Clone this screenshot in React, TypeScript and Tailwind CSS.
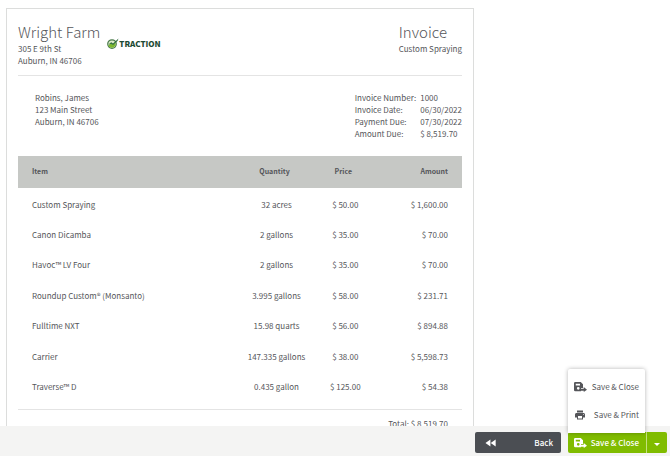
import { MdFastRewind, MdPrint } from "react-icons/md";

type Line = { item: string; quantity: string; price: string; amount: string };

const lines: Line[] = [
  { item: "Custom Spraying", quantity: "32 acres", price: "$ 50.00", amount: "$ 1,600.00" },
  { item: "Canon Dicamba", quantity: "2 gallons", price: "$ 35.00", amount: "$ 70.00" },
  { item: "Havoc™ LV Four", quantity: "2 gallons", price: "$ 35.00", amount: "$ 70.00" },
  { item: "Roundup Custom® (Monsanto)", quantity: "3.995 gallons", price: "$ 58.00", amount: "$ 231.71" },
  { item: "Fulltime NXT", quantity: "15.98 quarts", price: "$ 56.00", amount: "$ 894.88" },
  { item: "Carrier", quantity: "147.335 gallons", price: "$ 38.00", amount: "$ 5,598.73" },
  { item: "Traverse™ D", quantity: "0.435 gallon", price: "$ 125.00", amount: "$ 54.38" },
];

const details = [
  ["Invoice Number:", "1000"],
  ["Invoice Date:", "06/30/2022"],
  ["Payment Due:", "07/30/2022"],
  ["Amount Due:", "$ 8,519.70"],
];

function SaveExitIcon() {
  return (
    <svg viewBox="0 0 26 20" className="h-[10px] w-[13px] shrink-0" fill="currentColor" aria-hidden="true">
      <path
        fillRule="evenodd"
        d="M2.500 0H13.500L18 4.500V12H14V18.500H2.500A2.500 2.500 0 0 1 0 16V2.500A2.500 2.500 0 0 1 2.500 0ZM3.500 3.500V7H12V3.500ZM8.500 10A2.700 2.700 0 1 0 8.500 15.400A2.700 2.700 0 1 0 8.500 10Z"
      />
      <path d="M14 13.500H19.500V10L26 15.500L19.500 20V17.500H14Z" />
    </svg>
  );
}

function TractionLogo() {
  return (
    <div className="flex items-center text-[#1d4a33]">
      <svg viewBox="0 0 24 22" className="h-[11px] w-[12px] shrink-0" aria-hidden="true">
        <circle cx="10" cy="12" r="8.500" fill="#dfeccb" stroke="#4a7a4c" strokeWidth="2.500" />
        <path d="M3 15C6 10 9 11 11 13L17 9C18 15 15 19 10 19.500C6 19.500 3.500 17.500 3 15Z" fill="#7cb82f" />
        <path d="M5 11L8.500 8.500L12 11L23 1L21 6L12 14L8 11.500L4 13Z" fill="#2d6b3c" />
      </svg>
      <span className="text-[8px] leading-[11px] font-black">TRACTION</span>
    </div>
  );
}

export default function App() {
  return (
    <div className="flex h-screen flex-col bg-white font-['Noto_Sans_CJK_SC',sans-serif] text-[8px] leading-3 text-[#55565a]">
      <main className="min-h-0 flex-1 overflow-hidden pt-2 pr-[196px] pl-[6px]">
        <article className="border border-[#dcdddc] px-[11px] pt-3 pb-8">
          <header className="flex justify-between border-b border-[#e4e4e4] pb-2">
            <div className="flex gap-[7px]">
              <div>
                <h1 className="text-[15px] leading-[22px] font-light">Wright Farm</h1>
                <p>305 E 9th St</p>
                <p>Auburn, IN 46706</p>
              </div>
              <div className="pt-[17px]">
                <TractionLogo />
              </div>
            </div>
            <div>
              <h2 className="text-[15px] leading-[22px] font-light">Invoice</h2>
              <p>Custom Spraying</p>
            </div>
          </header>

          <section className="flex justify-between pt-4 pb-4 pl-[17px]">
            <address className="not-italic">
              Robins, James
              <br />
              123 Main Street
              <br />
              Auburn, IN 46706
            </address>
            <dl className="grid grid-cols-[auto_auto] gap-x-1">
              {details.map(([label, value]) => (
                <div key={label} className="contents">
                  <dt>{label}</dt>
                  <dd>{value}</dd>
                </div>
              ))}
            </dl>
          </section>

          <table className="w-full table-fixed border-collapse">
            <colgroup>
              <col className="w-[47%]" />
              <col className="w-[22%]" />
              <col className="w-[9%]" />
              <col className="w-[22%]" />
            </colgroup>
            <thead className="border-b-2 border-white bg-[#c6c8c5] text-[7px]">
              <tr className="h-[33px]">
                <th className="pb-[3px] pl-[14px] text-left">Item</th>
                <th className="pr-[2px] pb-[3px]">Quantity</th>
                <th className="pr-[2px] pb-[3px]">Price</th>
                <th className="pr-[14px] pb-[3px] text-right">Amount</th>
              </tr>
            </thead>
            <tbody>
              {lines.map((line) => (
                <tr key={line.item} className="h-[30px] even:h-[31px]">
                  <td className="pl-[14px]">{line.item}</td>
                  <td className="pl-[2px] text-center">{line.quantity}</td>
                  <td className="pl-[2px] text-center whitespace-nowrap">{line.price}</td>
                  <td className="pr-[14px] text-right">{line.amount}</td>
                </tr>
              ))}
            </tbody>
          </table>

          <p className="mt-[7px] border-t border-[#e4e4e4] pt-2 pr-[14px] text-right">Total: $ 8,519.70</p>
        </article>
      </main>

      <footer className="flex h-[30px] shrink-0 items-center justify-end gap-[7px] bg-[#f4f4f3] pt-[3px] pr-[3px]">
        <button
          type="button"
          className="flex h-[21px] w-[86px] items-center justify-between rounded-xs bg-[#4b4e53] pr-2 pl-[9px] text-[8px] font-medium text-white"
        >
          <MdFastRewind className="size-[14px]" />
          Back
        </button>
        <div className="relative flex">
          <button
            type="button"
            className="flex h-[21px] w-[78px] items-center justify-between rounded-l-xs bg-[#80bc00] pr-[7px] pl-[6px] text-[8px] font-medium text-white"
          >
            <SaveExitIcon />
            Save &amp; Close
          </button>
          <button
            type="button"
            aria-label="More save options"
            className="flex h-[21px] w-[21px] items-center justify-center rounded-r-xs border-l border-[#c4e07f] bg-[#80bc00] text-white"
          >
            <svg viewBox="0 0 6 3" className="mt-[3px] h-[3px] w-[6px]" fill="currentColor" aria-hidden="true">
              <path d="M0 0H6L3 3Z" />
            </svg>
          </button>
          <div className="absolute bottom-[20px] left-0 w-[77px] rounded-t-xs bg-white py-1 shadow-[0_0_4px_rgba(0,0,0,0.3)]">
            <button type="button" className="flex h-7 w-full items-center justify-between px-[6px]">
              <SaveExitIcon />
              Save &amp; Close
            </button>
            <button type="button" className="flex h-7 w-full items-center justify-between px-[6px]">
              <MdPrint className="size-3" />
              Save &amp; Print
            </button>
          </div>
        </div>
      </footer>
    </div>
  );
}
